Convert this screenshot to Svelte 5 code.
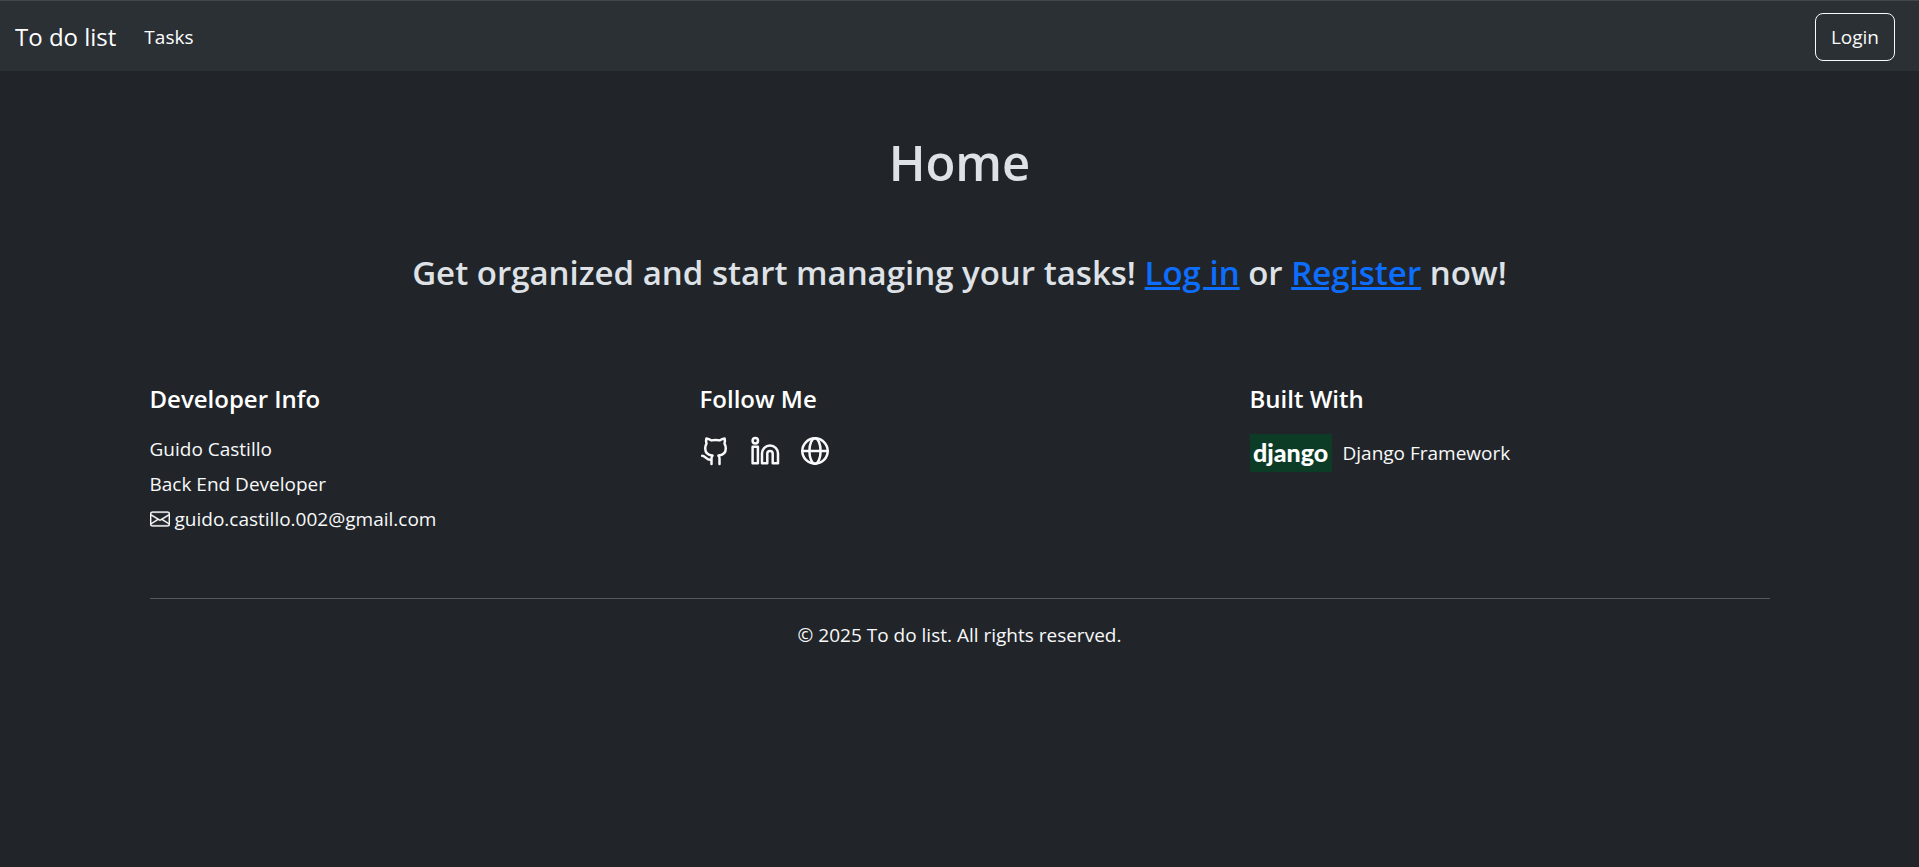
<script>
  const year = 2025;
</script>

<svelte:head><title>To do list</title></svelte:head>

<nav>
  <a class="brand" href="#home">To do list</a>
  <a class="link" href="#tasks">Tasks</a>
  <button type="button">Login</button>
</nav>

<main>
  <h1>Home</h1>
  <p class="lead">
    Get organized and start managing your tasks! <a href="#login">Log in</a> or <a href="#register">Register</a> now!
  </p>
</main>

<footer>
  <div class="columns">
    <section>
      <h2>Developer Info</h2>
      <ul>
        <li>Guido Castillo</li>
        <li>Back End Developer</li>
        <li>
          <a class="mail" href="mailto:guido.castillo.002@gmail.com">
            <svg width="20" height="20" viewBox="0 0 16 16" fill="currentColor" stroke="currentColor" stroke-width="0.25" aria-hidden="true">
              <path d="M0 4a2 2 0 0 1 2-2h12a2 2 0 0 1 2 2v8a2 2 0 0 1-2 2H2a2 2 0 0 1-2-2V4Zm2-1a1 1 0 0 0-1 1v.217l7 4.2 7-4.2V4a1 1 0 0 0-1-1H2Zm13 2.383-4.708 2.825L15 11.105V5.383Zm-.034 6.876-5.64-3.471L8 9.583l-1.326-.795-5.64 3.47A1 1 0 0 0 2 13h12a1 1 0 0 0 .966-.741ZM1 11.105l4.708-2.897L1 5.383v5.722Z" />
            </svg>
            <span>guido.castillo.002@gmail.com</span>
          </a>
        </li>
      </ul>
    </section>

    <section>
      <h2>Follow Me</h2>
      <div class="social">
        <a href="#github" aria-label="GitHub">
          <svg width="30" height="30" viewBox="0 0 30 30" aria-hidden="true">
            <path d="M11.5 28V22.5C11.5 21.2 11.9 20.3 12.6 19.6C8.2 19.2 5.2 16.8 5.2 12.2C5.2 10.4 5.6 8.9 6.5 7.7C5.9 5.9 5.9 4.2 6.4 2.4C8.3 2.5 9.8 3.2 11.2 4.4C14 3.8 17 3.8 19.8 4.4C21.2 3.2 22.7 2.5 24.6 2.4C25.1 4.2 25.1 5.9 24.5 7.7C25.4 8.9 25.8 10.4 25.8 12.2C25.8 16.8 22.8 19.2 18.4 19.6C19.1 20.3 19.5 21.2 19.5 22.5V28M11.5 23.6C6.8 25 6.2 20.2 2.2 19.8" />
          </svg>
        </a>
        <a href="#linkedin" aria-label="LinkedIn">
          <svg width="30" height="30" viewBox="0 0 30 30" aria-hidden="true">
            <circle cx="5.3" cy="4.8" r="2.7" />
            <path d="M2.6 10.8H7.9V27.2H2.6ZM12 27.2V17.6C12 13 15.5 9.6 20 9.6C24.5 9.6 28 13 28 17.6V27.2H22.7V17.6C22.7 16 21.6 14.9 20 14.9C18.4 14.9 17.3 16 17.3 17.6V27.2Z" />
          </svg>
        </a>
        <a href="#website" aria-label="Website">
          <svg width="30" height="30" viewBox="0 0 30 30" aria-hidden="true">
            <circle cx="15" cy="15" r="12.7" />
            <ellipse cx="15" cy="15" rx="5.6" ry="12.7" />
            <path d="M2.3 15H27.7" />
          </svg>
        </a>
      </div>
    </section>

    <section>
      <h2>Built With</h2>
      <a class="built" href="#django">
        <span class="logo">django</span>
        <span>Django Framework</span>
      </a>
    </section>
  </div>

  <p class="copyright">© {year} To do list. All rights reserved.</p>
</footer>

<style>
  :global(body) {
    margin: 0;
    background: #212529;
    color: #dee2e6;
    font-family: "Segoe UI", "Open Sans", "Noto Sans", sans-serif;
    font-size: 19px;
    line-height: 30px;
  }

  nav {
    display: flex;
    align-items: center;
    box-sizing: border-box;
    padding: 12px 24px 10px 15px;
    border-top: 1px solid #42464a;
    background: #2b3035;
  }

  nav a {
    color: #fff;
    text-decoration: none;
  }

  .brand {
    margin-right: 28px;
    font-size: 24px;
  }

  button {
    margin-left: auto;
    padding: 8px 15px;
    border: 1px solid #f8f9fa;
    border-radius: 8px;
    background: transparent;
    color: #f8f9fa;
    font: inherit;
  }

  main {
    padding: 61px 15px 60px;
    text-align: center;
  }

  h1 {
    margin: 0;
    font-size: 49px;
    font-weight: 600;
    line-height: 60px;
  }

  .lead {
    margin: 60px 0 0;
    font-size: 33px;
    font-weight: 600;
    line-height: 42px;
  }

  .lead a {
    color: #0d6efd;
    text-decoration-thickness: 3px;
  }

  footer {
    box-sizing: border-box;
    max-width: 1650px;
    margin: 0 auto;
    padding: 30px 15px;
    color: #f8f9fa;
  }

  .columns {
    display: grid;
    grid-template-columns: repeat(3, 1fr);
    column-gap: 30px;
    padding-bottom: 64px;
  }

  h2 {
    margin: 0 0 20px;
    color: #fff;
    font-size: 24px;
    font-weight: 600;
    line-height: 30px;
  }

  ul {
    display: grid;
    gap: 5px;
    margin: 0;
    padding: 0;
    list-style: none;
  }

  footer a {
    color: inherit;
    text-decoration: none;
  }

  .mail,
  .built {
    display: flex;
    align-items: center;
  }

  .mail {
    gap: 5px;
  }

  .built {
    gap: 11px;
  }

  .social {
    display: flex;
    gap: 20px;
    padding-top: 2px;
  }

  .social a {
    display: flex;
  }

  .social svg {
    fill: none;
    stroke: currentColor;
    stroke-width: 2.5;
    stroke-linecap: round;
    stroke-linejoin: round;
  }

  .logo {
    box-sizing: border-box;
    width: 82px;
    padding-bottom: 2px;
    background: #0c3c26;
    color: #fff;
    font-family: Lato, sans-serif;
    font-size: 25px;
    font-weight: 900;
    line-height: 36px;
    text-align: center;
  }

  .copyright {
    margin: 0;
    padding-top: 21px;
    border-top: 1px solid #54575b;
    text-align: center;
  }
</style>
